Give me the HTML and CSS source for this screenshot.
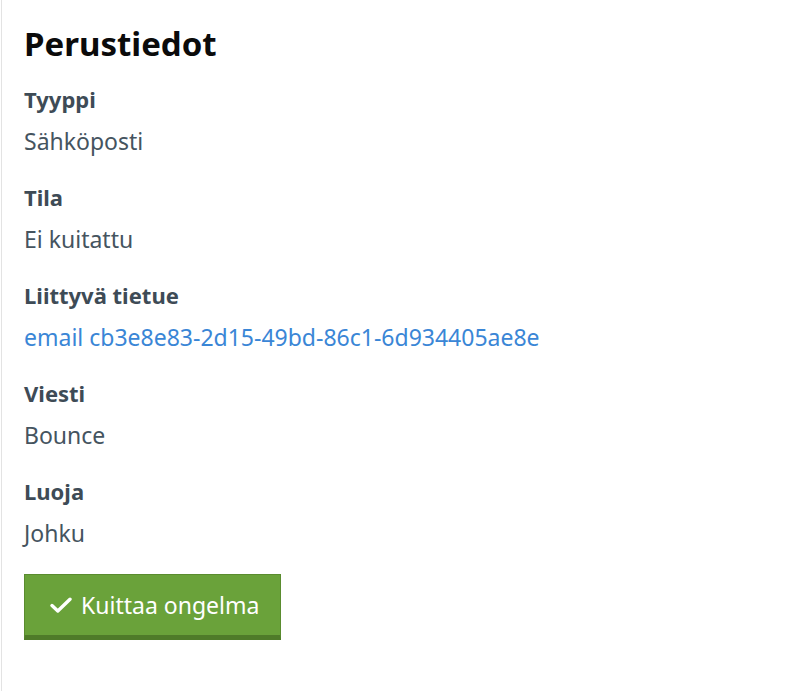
FILE: index.html
```html
<!DOCTYPE html>
<html lang="fi">
<head>
<meta charset="utf-8">
<title>Perustiedot</title>
<link rel="stylesheet" href="styles.css">
</head>
<body>
<main class="panel">
  <h2 class="title">Perustiedot</h2>
  <dl class="fields">
    <div class="field">
      <dt class="label">Tyyppi</dt>
      <dd class="value">Sähköposti</dd>
    </div>
    <div class="field">
      <dt class="label">Tila</dt>
      <dd class="value">Ei kuitattu</dd>
    </div>
    <div class="field">
      <dt class="label">Liittyvä tietue</dt>
      <dd class="value"><a class="link" href="#">email cb3e8e83-2d15-49bd-86c1-6d934405ae8e</a></dd>
    </div>
    <div class="field">
      <dt class="label">Viesti</dt>
      <dd class="value">Bounce</dd>
    </div>
    <div class="field">
      <dt class="label">Luoja</dt>
      <dd class="value">Johku</dd>
    </div>
  </dl>
  <button class="btn" type="button">
    <svg class="btn-icon" viewBox="0 0 22 16" width="22" height="16" aria-hidden="true"><path d="M2 8.6L7.8 14L20 2.2" fill="none" stroke="#fff" stroke-width="3.4" stroke-linecap="round" stroke-linejoin="round"/></svg>
    <span>Kuittaa ongelma</span>
  </button>
</main>
</body>
</html>
```

FILE: styles.css
```css
html, body {
  margin: 0;
  padding: 0;
  background: #ffffff;
}

body {
  font-family: "Noto Sans", "Open Sans", "Liberation Sans", sans-serif;
  color: #45545f;
  height: 691px;
}

.panel {
  margin-left: 1px;
  border-left: 1px solid #e3e3e3;
  min-height: 691px;
  box-sizing: border-box;
  padding: 24px 22px 0 22px;
}

.title {
  margin: 0 0 20px 0;
  font-size: 33px;
  line-height: 40px;
  font-weight: 700;
  color: #0b0b0b;
}

.fields {
  margin: 0;
}

.field {
  margin-bottom: 26px;
}

.label {
  margin: 0;
  font-size: 22px;
  line-height: 30px;
  font-weight: 700;
  color: #3e4b56;
}

.value {
  margin: 12px 0 0 0;
  font-size: 23px;
  line-height: 30px;
  color: #45545f;
}

.link {
  color: #3a86d6;
  text-decoration: none;
}

.btn {
  display: flex;
  align-items: center;
  gap: 9px;
  width: 257px;
  height: 66px;
  box-sizing: border-box;
  padding: 0 0 0 25px;
  margin-top: 0;
  background: #6aa23a;
  border: 1px solid #5a8c2f;
  border-bottom: 5px solid #4f7b29;
  font-family: inherit;
  font-size: 23px;
  color: #ffffff;
  cursor: pointer;
}

.btn-icon {
  flex: none;
}
```
